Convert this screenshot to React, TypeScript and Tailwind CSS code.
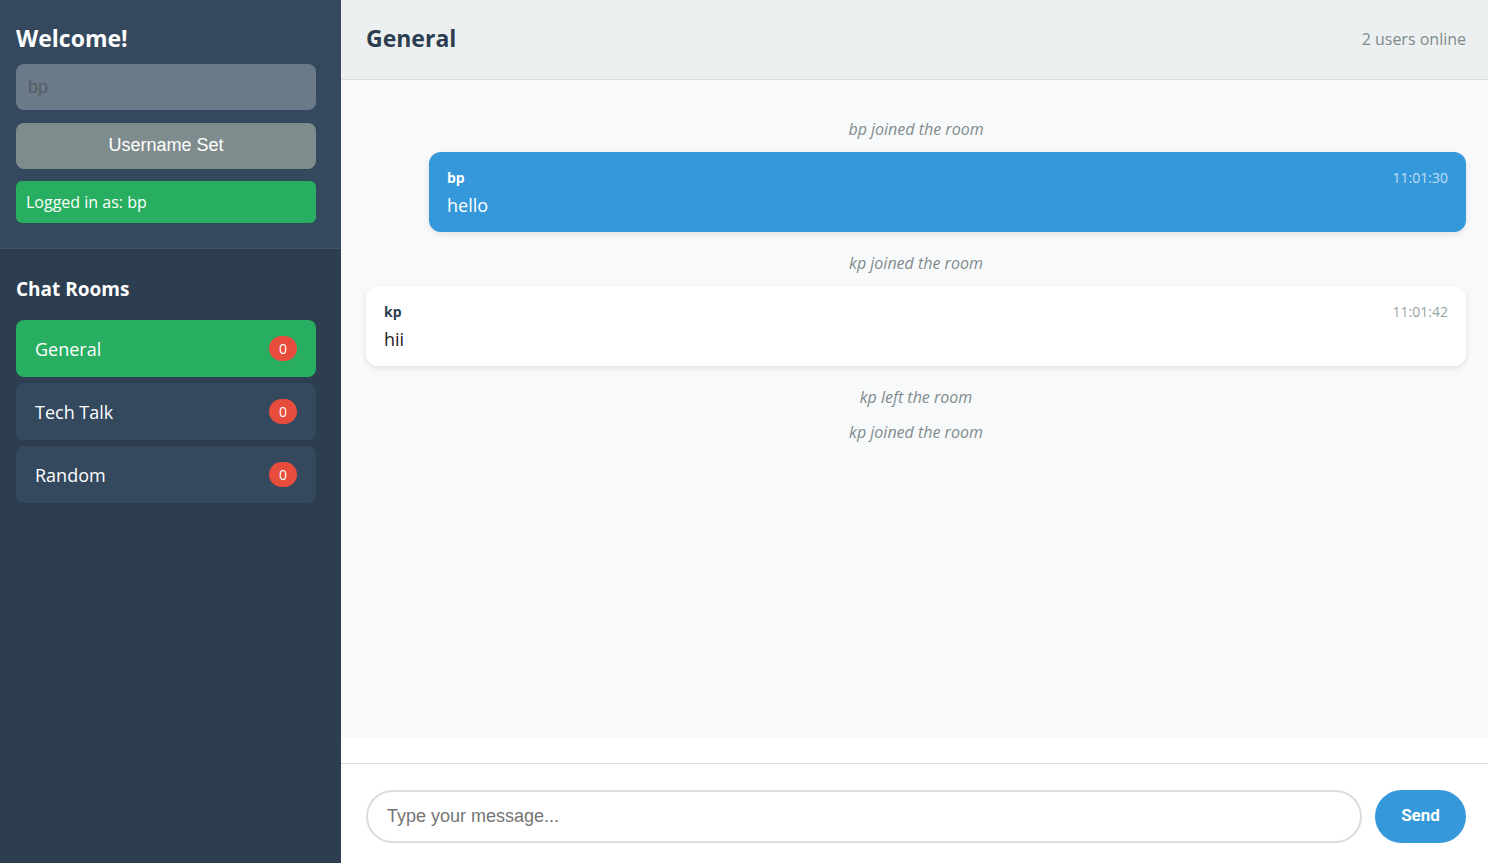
import React, { useState } from 'react';

type Msg =
  | { kind: 'system'; text: string }
  | { kind: 'chat'; user: string; text: string; time: string; own: boolean };

const rooms = [
  { name: 'General', unread: 0 },
  { name: 'Tech Talk', unread: 0 },
  { name: 'Random', unread: 0 },
];

const messages: Msg[] = [
  { kind: 'system', text: 'bp joined the room' },
  { kind: 'chat', user: 'bp', text: 'hello', time: '11:01:30', own: true },
  { kind: 'system', text: 'kp joined the room' },
  { kind: 'chat', user: 'kp', text: 'hii', time: '11:01:42', own: false },
  { kind: 'system', text: 'kp left the room' },
  { kind: 'system', text: 'kp joined the room' },
];

const ui = "font-['Open_Sans','Noto_Sans',sans-serif]";
const arial = "font-['Liberation_Sans',Arial,sans-serif]";

export default function App() {
  const [active, setActive] = useState('General');
  const [draft, setDraft] = useState('');

  return (
    <div className={`flex h-[863px] w-full overflow-hidden ${ui}`}>
      {/* Sidebar */}
      <aside className="flex w-[341px] shrink-0 flex-col bg-[#2c3e50] text-white">
        <div className="border-b border-[#3d566e] bg-[#34495e] pb-[25px] pl-4 pr-[25px] pt-[20px]">
          <h2 className="mb-2 text-[23px] font-bold leading-[36px]">Welcome!</h2>
          <input
            value="bp"
            disabled
            readOnly
            className={`mb-[13px] block h-[46px] w-full rounded-lg bg-[#6b7a89] px-3 text-[18px] text-[#555c63] outline-none ${arial}`}
          />
          <button
            className={`mb-3 block h-[46px] w-full rounded-lg bg-[#7f8c8d] pb-[2px] text-[18px] text-white ${arial}`}
          >
            Username Set
          </button>
          <div className="flex h-[42px] items-center rounded-md bg-[#27ae60] px-[10px] text-[16px]">
            Logged in as: bp
          </div>
        </div>

        <div className="pl-4 pr-[25px] pt-[27px]">
          <h3 className="mb-[18px] text-[19px] font-bold leading-[26px]">Chat Rooms</h3>
          <div className="flex flex-col gap-[6px]">
            {rooms.map((r) => (
              <button
                key={r.name}
                onClick={() => setActive(r.name)}
                className={`flex h-[57px] items-center justify-between rounded-lg px-[19px] text-[18px] ${
                  active === r.name ? 'bg-[#27ae60]' : 'bg-[#34495e]'
                }`}
              >
                <span className="pt-[2px]">{r.name}</span>
                <span className="flex h-[25px] w-[28px] items-center justify-center rounded-full bg-[#e74c3c] text-[14px]">
                  {r.unread}
                </span>
              </button>
            ))}
          </div>
        </div>
      </aside>

      {/* Main */}
      <main className="flex min-w-0 flex-1 flex-col bg-white">
        <header className="flex h-[80px] shrink-0 items-center justify-between border-b border-[#dddddd] bg-[#ecf0f1] pb-[2px] pl-[25px] pr-[22px]">
          <h1 className="text-[23px] font-bold text-[#2c3e50]">{active}</h1>
          <span className="text-[16px] text-[#7f8c8d]">2 users online</span>
        </header>

        <div className="flex h-[658px] shrink-0 flex-col gap-[9px] overflow-y-auto bg-[#f8f9fa] pl-[25px] pr-[22px] pt-[36px]">
          {messages.map((m, i) =>
            m.kind === 'system' ? (
              <div key={i} className="py-[3px] text-center text-[16px] italic leading-[20px] text-[#7f8c8d]">
                {m.text}
              </div>
            ) : (
              <div
                key={i}
                className={`mb-[9px] mt-[1px] rounded-xl px-[18px] pb-[15px] pt-[16px] shadow-[0_2px_6px_rgba(0,0,0,0.1)] ${
                  m.own ? 'ml-[63px] bg-[#3498db] text-white' : 'bg-white text-[#2c3e50]'
                }`}
              >
                <div className="mb-[5px] flex items-center justify-between leading-[20px]">
                  <span className="text-[14px] font-bold">{m.user}</span>
                  <span className={`text-[14px] ${m.own ? 'text-white/70' : 'text-[#95a5a6]'}`}>{m.time}</span>
                </div>
                <div className={`text-[18px] leading-[24px] ${m.own ? '' : 'text-[#222]'}`}>{m.text}</div>
              </div>
            )
          )}
        </div>

        <div className="h-[25px] shrink-0 bg-white" />

        <div className="flex h-[100px] shrink-0 gap-[13px] border-t border-[#dddddd] bg-white pl-[25px] pr-[22px] pt-[26px]">
          <input
            value={draft}
            onChange={(e) => setDraft(e.target.value)}
            placeholder="Type your message..."
            className={`h-[53px] flex-1 rounded-full border-2 border-[#dddddd] px-[19px] text-[18px] text-[#333] outline-none placeholder:text-[#757575] ${arial}`}
          />
          <button className="h-[53px] w-[91px] rounded-full bg-[#3498db] pb-[2px] font-['Roboto',sans-serif] text-[17px] font-bold text-white">
            Send
          </button>
        </div>
      </main>
    </div>
  );
}
